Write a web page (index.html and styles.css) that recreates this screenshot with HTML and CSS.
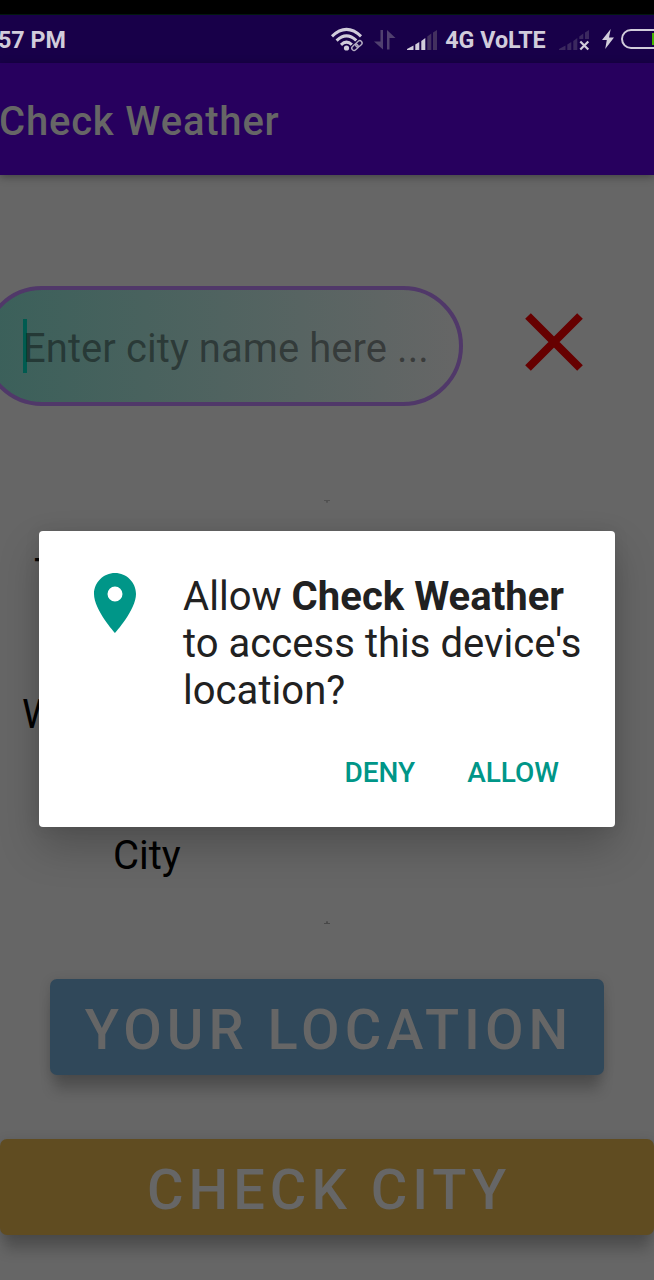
FILE: index.html
```html
<!DOCTYPE html>
<html lang="en">
<head>
<meta charset="utf-8">
<title>Check Weather</title>
<link rel="stylesheet" href="styles.css">
</head>
<body>
<div class="screen">
  <div class="bezel"></div>
  <header class="status">
    <span class="clock">57 PM</span>
    <svg class="wifi" width="36" height="28" viewBox="0 0 36 28" fill="none" stroke="#d1ccdb" stroke-width="3">
      <path d="M2 10.3Q16.500-3.500 31 10.300M6.600 14.600Q16.500 5.300 26.400 14.600M11 18.800Q16.500 13.600 22 18.800"/>
      <circle cx="16.500" cy="22" r="2.600" fill="#d1ccdb" stroke="none"/>
      <g transform="translate(-1 0) rotate(-42 28 19.500)">
        <rect x="21" y="15.500" width="14" height="8" fill="#180049" stroke="none"/>
        <rect x="21.800" y="17.200" width="7" height="4.600" rx="2.300" stroke-width="1.400" stroke="#b3abc2"/>
        <rect x="27" y="17.200" width="7" height="4.600" rx="2.300" stroke-width="1.400" stroke="#b3abc2"/>
      </g>
    </svg>
    <svg class="arrows" width="22" height="22" viewBox="0 0 22 22" fill="#50406f">
      <path d="M6.500 1H9V20.500L0 12.500H6.500ZM15.500 20.500H13V1L21.500 9H15.500Z"/>
    </svg>
    <svg class="signal" width="31" height="22" viewBox="0 0 31 22">
      <path fill="#d1ccdb" d="M0 21V20L6.500 16.500V21ZM8.300 21V15.500L12.300 13V21ZM14.300 21V12L18.300 9V21Z"/>
      <path fill="#43305f" d="M20.300 21V7.500L24.300 4.500V21ZM26 21V3.500L30 1V21Z"/>
    </svg>
    <span class="network">4G VoLTE</span>
    <svg class="nosim" width="31" height="22" viewBox="0 0 31 22">
      <path fill="#3b285f" d="M0 21V20L6.500 16.500V21ZM8.300 21V15.500L12.300 13V21ZM14.300 21V12L18.300 9V21ZM20.300 10V7.500L24.300 4.500V10ZM26 10V3.500L30 1V10Z"/>
      <path fill="none" stroke="#d1ccdb" stroke-width="2.200" d="M21.300 12.500L29.300 20.500M29.300 12.500L21.300 20.500"/>
    </svg>
    <svg class="bolt" width="12" height="20" viewBox="0 0 12 20"><path fill="#d1ccdb" d="M8.700 0L0 11H4.800L3.200 20L12 8.500H7Z"/></svg>
    <svg class="battery" width="33" height="20" viewBox="0 0 33 20">
      <rect x="1" y="1" width="48" height="18" rx="9" fill="none" stroke="#d1ccdb" stroke-width="2"/>
      <path d="M31 4H33V16H31Z" fill="#47b600"/>
    </svg>
  </header>
  <div class="appbar">Check Weather</div>
  <main class="content">
    <div class="search">
      <div class="field"><span class="caret"></span><span class="hint">Enter city name here ...</span></div>
      <svg class="clear" width="58" height="58" viewBox="0 0 58 58"><path d="M3 3L55 55M55 3L3 55" stroke="#660000" stroke-width="8" fill="none"/></svg>
    </div>
    <svg class="mark mark-top" width="6" height="3" viewBox="0 0 6 3"><path d="M0 0H6V1H4L3.500 3H2.500L2 1H0Z" fill="#505050"/></svg>
    <div class="label label-t">T</div>
    <div class="label label-w">W</div>
    <div class="label label-city">City</div>
    <svg class="mark mark-bottom" width="6" height="3" viewBox="0 0 6 3"><path d="M0 3H6V2H4L3.500 0H2.500L2 2H0Z" fill="#484848"/></svg>
    <div class="button locate">YOUR LOCATION</div>
    <div class="button check">CHECK CITY</div>
  </main>
  <section class="dialog">
    <div class="message">
      <svg class="pin" width="72" height="72" viewBox="0 0 24 24"><path fill="#009688" d="M12 2C8.130 2 5 5.130 5 9c0 5.250 7 13 7 13s7-7.750 7-13c0-3.870-3.130-7-7-7zm0 9.500a2.500 2.500 0 1 1 0-5 2.500 2.500 0 0 1 0 5z"/></svg>
      <p class="question">Allow <b>Check Weather</b><br>to access this device's<br>location?</p>
    </div>
    <div class="actions"><span class="deny">DENY</span><span class="allow">ALLOW</span></div>
  </section>
</div>
</body>
</html>
```
FILE: styles.css
```css
* { box-sizing: border-box; }
body { margin: 0; font-family: Roboto, sans-serif; }
svg { display: block; flex: none; }
.screen {
  position: relative;
  width: 654px;
  height: 1280px;
  overflow: hidden;
  background: #666;
  display: flex;
  flex-direction: column;
}
.bezel { height: 15px; background: #000; border-bottom: 1px solid #02180f; flex: none; }
.status {
  height: 48px;
  flex: none;
  display: flex;
  align-items: flex-start;
  background: #180049;
  color: #d1ccdb;
  font-size: 23.3px;
  font-weight: 700;
  line-height: 28px;
  white-space: nowrap;
}
.clock { width: 331px; padding-top: 11px; margin-left: -2px; }
.wifi { margin: 11px 0 0 2px; }
.arrows { margin: 14px 0 0 8px; }
.signal { margin: 14px 0 0 11px; }
.network { width: 104px; margin: 11px 0 0 7px; }
.nosim { margin: 14px 0 0 10px; }
.bolt { margin: 14px 0 0 12px; }
.battery { margin: 14px 0 0 7px; }
.appbar {
  height: 112px;
  flex: none;
  background: #27005e;
  color: #666;
  font-size: 40px;
  font-weight: 500;
  line-height: 48px;
  padding-top: 35px;
  text-indent: -1px;
  letter-spacing: 0.8px;
  box-shadow: 0 2px 8px rgba(0, 0, 0, .35);
}
.content { display: flex; flex-direction: column; align-items: flex-start; }
.search { display: flex; padding-top: 111px; height: 231px; }
.field {
  width: 481px;
  height: 120px;
  margin-left: -18px;
  border: 4px solid #503869;
  border-radius: 60px;
  background: linear-gradient(90deg, #3a605a, #666);
  display: flex;
  align-items: flex-start;
}
.caret { width: 4px; height: 54px; margin: 29px 0 0 37px; background: #005b50; flex: none; }
.hint { font-size: 40px; line-height: 48px; letter-spacing: .06px; margin: 35px 0 0 -4px; color: rgba(0, 0, 0, .42); white-space: nowrap; }
.clear { margin: 27px 0 0 62px; }
.mark-top { margin: 94px 0 0 324px; }
.label { font-size: 40px; line-height: 48px; color: #000; }
.label-t { margin: 47px 0 0 34px; }
.label-w { margin: 93px 0 0 22px; }
.label-city { margin: 93px 0 0 113px; }
.mark-bottom { margin: 41px 0 0 324px; }
.button {
  height: 96px;
  border-radius: 7px;
  color: #666;
  font-size: 56px;
  font-weight: 500;
  line-height: 66px;
  letter-spacing: 5px;
  padding: 18px 0 0 4px;
  text-align: center;
  white-space: nowrap;
  box-shadow: 0 19px 14px -4px rgba(0, 0, 0, .2), 0 2px 12px rgba(0, 0, 0, .14);
}
.locate { width: 554px; margin: 55px 0 0 50px; background: #30485a; }
.check { width: 654px; margin-top: 64px; background: #604c21; }
.dialog {
  position: absolute;
  left: 39px;
  top: 531px;
  width: 576px;
  height: 296px;
  background: #fff;
  border-radius: 4px;
  box-shadow: 0 20px 40px rgba(0, 0, 0, .22), 0 0 16px rgba(0, 0, 0, .08);
}
.message { display: flex; padding: 36px 0 0 40px; }
.question {
  margin: 6px 0 0 32px;
  font-size: 40px;
  line-height: 47px;
  letter-spacing: .04px;
  color: #212121;
  white-space: nowrap;
}
.actions {
  display: flex;
  justify-content: flex-end;
  padding: 42px 56px 0 0;
  gap: 52px;
  color: #009688;
  font-size: 28px;
  font-weight: 500;
  line-height: 34px;
}
```
